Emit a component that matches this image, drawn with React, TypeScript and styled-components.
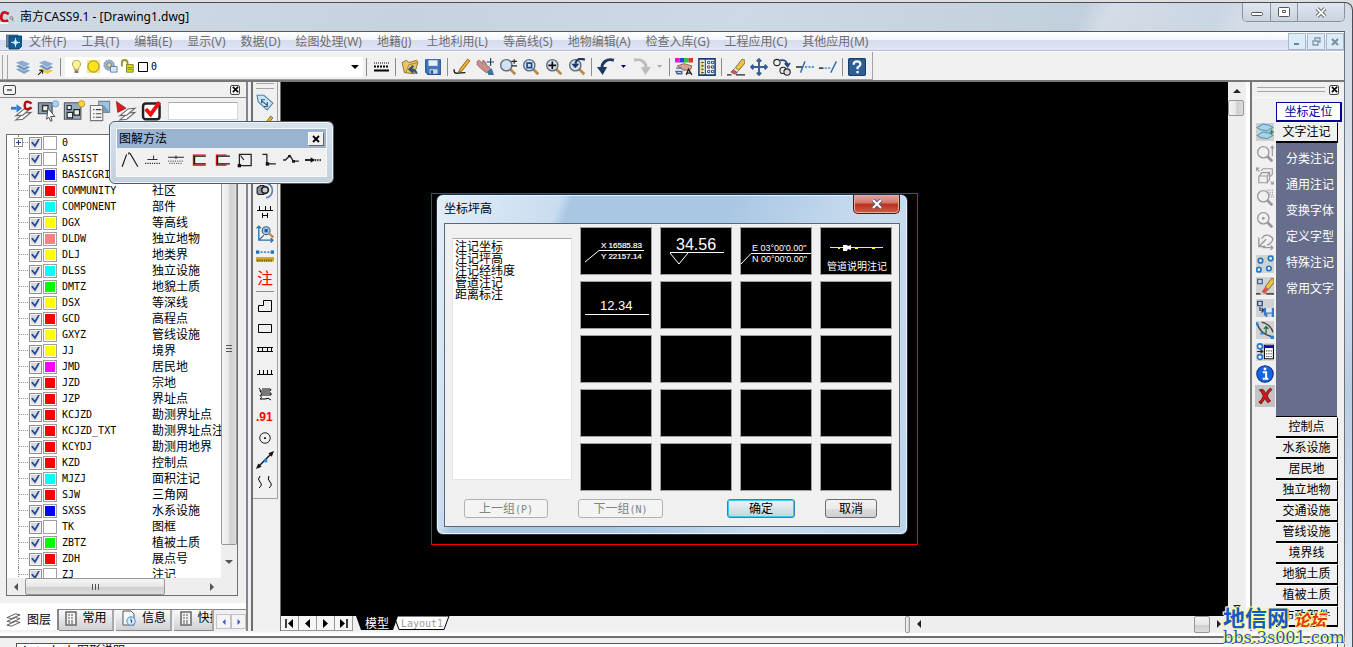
import React from 'react';
import styled, { createGlobalStyle, css } from 'styled-components';

const UI = `'Noto Sans', 'Noto Sans CJK SC', sans-serif`;
const SONG = `'DejaVu Sans Mono', 'Noto Sans CJK SC', monospace`;

const Global = createGlobalStyle`
  * { box-sizing: border-box; }
  body { margin: 0; background: #dedede; font-family: ${UI}; font-size: 12px; line-height: 16px; color: #000; overflow: hidden; }
  button, input, select { font: inherit; color: inherit; margin: 0; padding: 0; border: 0; background: none; border-radius: 0; }
  svg { display: block; flex: none; }
`;

/* ---------- window frame ---------- */
const Frame = styled.div`
  position: relative;
  height: 100vh;
  display: flex;
  flex-direction: column;
  padding-top: 2px;
`;
const Shell = styled.div`
  flex: 1;
  min-height: 0;
  display: flex;
  flex-direction: column;
  padding-right: 7px;
  border-top: 1px solid #4b4f55;
  border-right: 1px solid #4b4f55;
  border-top-right-radius: 8px;
  background: linear-gradient(180deg, #d3dde8 0, #d3dde8 120px, #dbe6f1 200px, #b9cde2 60%, #dbe8f5 100%);
`;
const TitleBar = styled.header`
  display: flex;
  height: 28px;
  align-items: center;
  background: linear-gradient(115deg, #d0dae5 0%, #c6d3df 30%, #cdd9e5 55%, #c2cfdc 80%, #d3dde8 82%, #cad6e2 90%, #d3dde8 92%);
`;
const TitleText = styled.h1`
  flex: 1;
  margin: 0 0 0 6px;
  font-size: 12px;
  font-weight: 400;
`;
const WinButtons = styled.div`
  display: flex;
  align-self: flex-start;
  height: 19px;
  border: 1px solid #8a949f;
  border-top: 0;
  border-radius: 0 0 5px 5px;
  overflow: hidden;
`;
const WinButton = styled.button<{ $w: number }>`
  display: grid;
  place-items: center;
  width: ${p => p.$w}px;
  border-right: 1px solid #8a949f;
  background: linear-gradient(#dfe6ee, #c9d3de);
  &:last-child { border-right: 0; }
`;
const Client = styled.div`
  flex: 1;
  min-height: 0;
  display: flex;
  flex-direction: column;
  border-top: 1px solid #55585e;
  border-right: 1px solid #6d7278;
  background: #f0f0f0;
`;

/* ---------- menu ---------- */
const MenuBar = styled.nav`
  display: flex;
  align-items: center;
  height: 20px;
  padding-left: 6px;
  border-bottom: 1px solid #fff;
  box-shadow: inset 0 -1px #b7bbd0;
  background: linear-gradient(#fff 0, #f2f5fb 40%, #d6dcee 45%, #e2e6f6 100%);
`;
const MenuItem = styled.button`
  padding: 0 8px 0 7px;
  color: #6d6d6d;
  white-space: nowrap;
`;
const MdiButtons = styled.div`
  display: flex;
  gap: 1px;
  margin-left: auto;
`;
const MdiButton = styled.button`
  display: grid;
  place-items: center;
  width: 18px;
  height: 17px;
  border: 1px solid #a9b9c9;
  background: #dcebf8;
`;

/* ---------- top toolbar ---------- */
const ToolRow = styled.div`
  display: flex;
  height: 30px;
  border-bottom: 2px solid #777;
`;
const ToolBar = styled.div`
  display: flex;
  align-items: center;
  padding: 2px 4px 0 2px;
  border-right: 1px solid #a0a0a0;
  border-bottom: 1px solid #a0a0a0;
`;
const Grip = styled.i<{ $flat?: boolean }>`
  display: block;
  border: 1px solid #a6a6a6;
  ${p => p.$flat
    ? css`height: 6px; border-left: 0; border-right: 0;`
    : css`width: 6px; height: 24px; border-top: 0; border-bottom: 0; margin-right: 3px;`}
`;
const Tool = styled.button<{ $w?: number; $h?: number; $on?: boolean }>`
  display: grid;
  place-items: center;
  flex: none;
  width: ${p => p.$w ?? 23}px;
  height: ${p => p.$h ?? 24}px;
  background: ${p => (p.$on ? '#c3c3c3' : 'transparent')};
`;
const Sep = styled.i<{ $flat?: boolean }>`
  display: block;
  flex: none;
  background: #8c8c8c;
  ${p => p.$flat ? css`height: 1px; margin: 2px 3px 3px;` : css`width: 1px; height: 18px; margin: 0 2px 0 3px;`}
`;
const LayerBox = styled.label`
  position: relative;
  display: flex;
  align-items: center;
  gap: 2px;
  width: 298px;
  height: 20px;
  margin-left: 2px;
  padding: 0 4px;
  background: #fff;
  select { flex: 1; appearance: none; font: 10px/16px ${SONG}; outline: 0; }
`;

/* ---------- work area ---------- */
const Work = styled.div`
  flex: 1;
  min-height: 0;
  display: flex;
`;
const Left = styled.aside`
  display: flex;
  flex-direction: column;
  width: 253px;
  flex: none;
  border-right: 2px solid #6e6e6e;
`;
const LeftInner = styled.div`
  flex: 1;
  min-height: 0;
  display: flex;
  flex-direction: column;
  width: 248px;
  border-right: 2px solid #85858c;
`;
const PanelHead = styled.div`
  display: flex;
  justify-content: space-between;
  align-items: center;
  height: 16px;
  padding: 0 6px 0 3px;
  border-bottom: 1px solid #8a8a8a;
`;
const MiniButton = styled.button<{ $w?: number }>`
  display: grid;
  place-items: center;
  width: ${p => p.$w ?? 10}px;
  height: 10px;
  border: 1px solid #444;
  border-radius: 2px;
  background: #f4f4f4;
`;
const LayerTools = styled.div`
  display: flex;
  align-items: center;
  height: 26px;
  padding-left: 9px;
  input { width: 70px; height: 18px; margin-left: 3px; background: #fff; border: 1px solid #d5d5d5; border-top-color: #aaa; }
`;
const ListFrame = styled.div`
  flex: 1;
  min-height: 0;
  display: flex;
  flex-direction: column;
  margin: 10px 8px 7px 6px;
  border: 1px solid #6f6f6f;
`;
const ListArea = styled.div`
  flex: 1;
  min-height: 0;
  display: flex;
`;
const LayerTable = styled.div`
  flex: 1;
  min-width: 0;
  overflow: hidden;
  background: #fff;
`;
const LayerRow = styled.label`
  display: flex;
  align-items: center;
  height: 16px;
  white-space: nowrap;
  > * { flex: none; }
`;
const Branch = styled.span`
  position: relative;
  align-self: stretch;
  width: 11px;
  margin-left: 11px;
  border-left: 1px dotted #888;
  background: linear-gradient(90deg, #999 50%, transparent 50%) 0 7px / 2px 1px repeat-x;
`;
const Expand = styled.button`
  position: absolute;
  left: -5px;
  top: 3px;
  display: grid;
  place-items: center;
  width: 9px;
  height: 9px;
  border: 1px solid #919191;
  background: #fff;
`;
const Check = styled.input`
  appearance: none;
  display: grid;
  place-items: center;
  width: 13px;
  height: 13px;
  border: 1px solid #8e8f8f;
  background: linear-gradient(135deg, #c8d0d8, #f2f4f7);
  box-shadow: inset 0 0 0 1px #f4f4f4;
  &:checked::after {
    content: '';
    width: 9px;
    height: 9px;
    background: #31478f;
    clip-path: polygon(0 45%, 20% 35%, 42% 65%, 82% 0, 100% 4%, 46% 100%);
  }
`;
const Swatch = styled.span<{ $c: string }>`
  width: 14px;
  height: 14px;
  margin: 0 5px 0 1px;
  border: 1px solid #a0a0a0;
  background: ${p => p.$c};
  box-shadow: inset 0 0 0 1px #fff;
`;
const LayerName = styled.span`
  width: 90px;
  font: 10px/16px ${SONG};
`;
const Bar = styled.div<{ $flat?: boolean }>`
  display: flex;
  flex: none;
  flex-direction: ${p => (p.$flat ? 'row' : 'column')};
  ${p => (p.$flat ? css`height: 17px;` : css`width: 16px;`)}
  background: #eeeeee;
`;
const Thumb = styled.div<{ $flat?: boolean; $size?: number }>`
  display: grid;
  place-items: center;
  flex: ${p => (p.$size ? `0 0 ${p.$size}px` : '1')};
  border: 1px solid #979797;
  border-radius: 2px;
  background: linear-gradient(${p => (p.$flat ? '180deg' : '90deg')}, #f5f5f5, #e6e6e6 50%, #cfcfcf 55%, #dcdcdc);
`;
const Spacer = styled.div<{ $size?: number }>`
  flex: ${p => (p.$size ? `0 0 ${p.$size}px` : '1')};
`;
const PaneTabs = styled.div`
  display: flex;
  height: 28px;
  padding-top: 6px;
  background: linear-gradient(#fff 6px, #85858c 6px, #85858c 7px, #f0f0f0 7px);
`;
const PaneTab = styled.button<{ $on?: boolean; $w: number }>`
  display: flex;
  align-items: center;
  gap: 6px;
  width: ${p => p.$w}px;
  height: 21px;
  overflow: hidden;
  white-space: nowrap;
  padding-left: 6px;
  background: ${p => (p.$on ? '#fff' : 'linear-gradient(#fafafa, #cfcfd4)')};
  border-right: 2px solid ${p => (p.$on ? '#85858c' : '#a8a8ac')};
  ${p => !p.$on && css`border-bottom: 1px solid #85858c; margin-top: 1px; padding-bottom: 4px; margin-right: 2px;`}
`;
const PageButton = styled.button`
  display: grid;
  place-items: center;
  width: 15px;
  height: 15px;
  margin-top: 5px;
  border: 1px solid #c2c2c8;
  background: #f4f4f6;
`;

const SideTools = styled.div`
  display: flex;
  flex-direction: column;
  align-self: flex-start;
  width: 25px;
  flex: none;
  padding: 1px 0 5px;
  border-right: 1px solid #a0a0a0;
  border-bottom: 1px solid #a0a0a0;
`;
const SideDock = styled.div`
  width: 28px;
  flex: none;
  border-right: 1px solid #6e6e6e;
  ${SideTools} ${Grip} { margin: 0 3px 2px; }
`;

const Center = styled.main`
  position: relative;
  flex: 1;
  min-width: 0;
  display: flex;
  flex-direction: column;
`;
const ViewRow = styled.div`
  flex: 1;
  min-height: 0;
  display: flex;
`;
const Canvas = styled.div`
  position: relative;
  flex: 1;
  background: #000;
`;
const RedBox = styled.div`
  position: absolute;
  left: 150px;
  top: 111px;
  width: 487px;
  height: 352px;
  border: 1px solid #f00;
`;
const LayoutRow = styled.div`
  display: flex;
  height: 15px;
  flex: none;
  background: #f0f0f0;
`;
const NavButton = styled.button`
  display: grid;
  place-items: center;
  width: 18px;
  height: 15px;
  border-right: 1px solid #999;
  border-bottom: 1px solid #999;
  background: #f6f6f6;
`;
const SheetTab = styled.button<{ $on?: boolean }>`
  position: relative;
  z-index: ${p => (p.$on ? 1 : 0)};
  width: ${p => (p.$on ? 42 : 56)}px;
  height: 15px;
  line-height: 15px;
  margin-left: ${p => (p.$on ? 3 : -4)}px;
  color: ${p => (p.$on ? '#fff' : '#9a9a9a')};
  font-family: ${p => (p.$on ? UI : SONG)};
  font-size: ${p => (p.$on ? 12 : 10)}px;
  svg { position: absolute; left: 0; top: 0; z-index: -1; }
`;

/* ---------- right dock ---------- */
const Right = styled.aside`
  display: flex;
  flex-direction: column;
  width: 94px;
  flex: none;
  margin-left: 6px;
  border-left: 2px solid #777;
  box-shadow: -4px 0 #fff;
  overflow: hidden;
`;
const RightHead = styled.div`
  display: flex;
  align-items: center;
  gap: 4px;
  height: 16px;
  padding: 0 5px;
  border-bottom: 1px solid #f8f8ff;
  ${Grip} { flex: 1; height: 5px; }
`;
const RightBody = styled.div`
  flex: 1;
  min-height: 0;
  display: flex;
  padding: 4px 2px 4px 3px;
`;
const RightIcons = styled.div`
  padding-top: 19px;
  width: 20px;
  margin-right: 1px;
`;
const RightMenu = styled.div`
  flex: 1;
  display: flex;
  flex-direction: column;
  min-width: 0;
  overflow: hidden;
`;
const Locate = styled.button`
  width: 66px;
  height: 20px;
  flex: none;
  border: 2px solid #00009c;
  border-top-width: 1px;
  border-left-width: 1px;
  color: #00009c;
  background: #fff;
`;
const Category = styled.button`
  width: 62px;
  height: 21px;
  flex: none;
  border-top: 1px solid #fff;
  border-right: 1px solid #000;
  border-bottom: 2px solid #000;
  background: #f0f0f0;
`;
const SubPanel = styled.div`
  display: flex;
  flex-direction: column;
  align-items: flex-start;
  flex: 1;
  width: 61px;
  min-height: 274px;
  padding-top: 3px;
  background: #666e8c;
  border-bottom: 1px solid #000;
`;
const SubItem = styled.button`
  height: 26px;
  padding-left: 10px;
  color: #fff;
  flex: none;
`;

/* ---------- floating toolbar ---------- */
const Floating = styled.section`
  position: absolute;
  left: 109px;
  top: 121px;
  width: 225px;
  padding: 6px;
  border: 1px solid #4d5964;
  border-radius: 6px;
  background: linear-gradient(#d8e2ed, #c3d0de);
  box-shadow: inset 0 0 0 1px #eef3f8;
`;
const FloatingBody = styled.div`
  border: 1px solid #f8f8f8;
  background: #f0f0f0;
`;
const FloatingTitle = styled.div`
  display: flex;
  align-items: center;
  justify-content: space-between;
  height: 19px;
  padding: 0 2px;
  background: #99b4d1;
`;
const FloatingClose = styled.button`
  display: grid;
  place-items: center;
  width: 16px;
  height: 14px;
  border: 1px solid #666;
  border-top-color: #fff;
  border-left-color: #fff;
  background: #f0f0f0;
`;
const FloatingTools = styled.div`
  display: flex;
  height: 28px;
  padding-left: 1px;
`;

/* ---------- dialog ---------- */
const Dialog = styled.section`
  position: absolute;
  left: 155px;
  top: 112px;
  width: 472px;
  padding: 0 7px 7px;
  border: 1px solid #23303d;
  border-radius: 7px;
  background: linear-gradient(110deg, #e4eef8 0, #c9dcef 21%, #a9c7e3 23%, #a9c7e3 50%, #c9dcef 75%, #bdd3ea 100%);
  box-shadow: inset 0 0 0 1px #e8f3fd;
`;
const DialogTitle = styled.div`
  display: flex;
  align-items: center;
  height: 28px;
  h2 { flex: 1; margin: 0; font-size: 12px; font-weight: 400; }
`;
const RedClose = styled.button`
  display: grid;
  place-items: center;
  align-self: flex-start;
  width: 47px;
  height: 19px;
  border: 1px solid #4b1a1a;
  border-top: 0;
  border-radius: 0 0 5px 5px;
  background: linear-gradient(#e5a79c 0, #d27465 45%, #b9321d 50%, #d4594a 100%);
  box-shadow: inset 0 0 0 1px #e9a79d;
`;
const DialogBody = styled.div`
  padding: 3px 7px 8px;
  border: 1px solid #586878;
  background: #f0f0f0;
`;
const DialogMain = styled.div`
  display: flex;
  align-items: flex-start;
  gap: 8px;
`;
const ListBox = styled.select`
  width: 120px;
  height: 242px;
  margin-top: 11px;
  padding: 0 2px;
  border: 1px solid #e3e3e3;
  border-top-color: #ababab;
  background: #fff;
  overflow: hidden;
  outline: 0;
  option { height: 12px; min-height: 12px; padding: 0; line-height: 12px; }
  option:first-child { margin-top: -2px; }
`;
const Tiles = styled.div`
  display: grid;
  grid-template-columns: repeat(4, 72px);
  grid-auto-rows: 48px;
  gap: 6px 8px;
`;
const Tile = styled.button`
  border: 1px solid #a0a0a0;
  background: #000;
  overflow: hidden;
`;
const DialogButtons = styled.div`
  display: flex;
  align-items: center;
  height: 19px;
  margin-top: 8px;
  padding-left: 12px;
`;
const PushButton = styled.button<{ $w: number; $gap?: number; $main?: boolean }>`
  width: ${p => p.$w}px;
  height: 19px;
  margin-left: ${p => p.$gap ?? 0}px;
  line-height: 15px;
  border: 1px solid #707070;
  border-radius: 3px;
  background: linear-gradient(#f2f2f2, #ebebeb 50%, #dddddd 50%, #cfcfcf);
  ${p => p.$main && css`border-color: #3c7fb1; box-shadow: inset 0 0 0 1px #3fc8f4; background: linear-gradient(#f0f5f8, #d8e4ea 50%, #c5d4dc);`}
  &:disabled { color: #838383; border-color: #adb2b5; background: #f4f4f4; }
  span { font: 10px/15px ${SONG}; }
`;

/* ---------- command strip and site mark ---------- */
const CommandStrip = styled.footer`
  height: 16px;
  flex: none;
  padding: 5px 6px 0 0;
  overflow: hidden;
  background: linear-gradient(#f0f0f0 0, #fff 3px, #fff 5px, #6e6e6e 5px, #6e6e6e 7px, #f0f0f0 7px);
`;
const CommandText = styled.div`
  margin: 7px 0 0 16px;
  height: 20px;
  padding-left: 4px;
  line-height: 14px;
  border: 1px solid #555;
  background: #fff;
`;
const SiteMark = styled.div`
  position: absolute;
  right: 6px;
  bottom: 2px;
  width: 124px;
  color: #1459c8;
  font-family: 'Liberation Serif', 'Noto Sans CJK SC', serif;
  text-shadow: 1px 0 #ff8, -1px 0 #ff8, 0 1px #ff8, 0 -1px #ff8, 1px 1px #ff8, -1px -1px #ff8;
  pointer-events: none;
  div { font-size: 22px; font-weight: 700; line-height: 20px; white-space: nowrap; }
  em { margin-left: 5px; font-size: 16px; color: #e8301c; }
  p { margin: 0; font: 400 16px/14px 'DejaVu Serif', serif; }
`;

/* ---------- drawings ---------- */
const Svg = ({ s = 18, h, vb = '0 0 16 16', children }: { s?: number; h?: number; vb?: string; children: React.ReactNode }) => (
  <svg width={s} height={h ?? s} viewBox={vb} fill="none" aria-hidden="true">{children}</svg>
);
const Tri = ({ d, c = '#222' }: { d: 'u' | 'd' | 'l' | 'r'; c?: string }) => {
  const pts = { u: '0,6 4,2 8,6', d: '0,2 4,6 8,2', l: '6,0 2,4 6,8', r: '2,0 6,4 2,8' }[d];
  return <Svg s={8} vb="0 0 8 8"><polygon points={pts} fill={c} /></Svg>;
};
const Cross = ({ s = 8, c = '#000', w = 1.6 }: { s?: number; c?: string; w?: number }) => (
  <Svg s={s} vb="0 0 8 8"><path d="M1 1l6 6M7 1l-6 6" stroke={c} strokeWidth={w} /></Svg>
);
const Layers = ({ last = '#7f9fc4', children }: { last?: string; children?: React.ReactNode }) => (
  <Svg>
    <path d="M1 10l6-2 8 3-6 3.500z" fill={last} stroke="#fff" strokeWidth=".5" />
    <path d="M1 7l6-2 8 3-6 3.500z" fill="#6f94bb" stroke="#fff" strokeWidth=".5" />
    <path d="M1 4l6-2 8 3-6 3.500z" fill="#8bacd0" stroke="#fff" strokeWidth=".5" />
    {children}
  </Svg>
);
const Lens = ({ c = '#667', handle = '#b98a4a', glass = '#cfe2f3', children }: { c?: string; handle?: string; glass?: string; children?: React.ReactNode }) => (
  <Svg>
    <path d="M10 10l4.500 4.500" stroke={handle} strokeWidth="2.400" />
    <circle cx="6.500" cy="6.500" r="5" fill={glass} stroke={c} strokeWidth="1.200" />
    {children}
  </Svg>
);
const Sheets = () => (
  <><path d="M3.500 14.500l5-.5 6-5-5 .5z" fill="#fff" stroke="#666" strokeWidth=".8" /><path d="M3.500 11.500l5-.5 6-5-5 .5z" fill="#fff" stroke="#666" strokeWidth=".8" /></>
);
const fourWay = 'M8 1v14M1 8h14M6 3l2-2 2 2M6 13l2 2 2-2M3 6L1 8l2 2M13 6l2 2-2 2';

const Bulb = () => (
  <Svg s={15}><path d="M5.500 11V9C2 6 4 1.500 8 1.500S14 6 10.500 9v2z" fill="#fdf3a0" stroke="#b89a30" /><path d="M6 12h4v3H6z" fill="#777" /></Svg>
);
const SunIcon = () => (
  <Svg s={15}><path d="M1 1h14v14H1z" fill="#f8e48c" /><circle cx="8" cy="8" r="6" fill="#ffe417" stroke="#8a8334" /></Svg>
);
const SunSheet = () => (
  <Svg s={15}><circle cx="6.500" cy="6.500" r="5.500" fill="#9db5cc" stroke="#5f7f9f" strokeDasharray="2 1" /><circle cx="6.500" cy="6.500" r="2.500" fill="#e6d79b" stroke="#5f7f9f" /><path d="M8 8h7v6H8z" fill="#dbe7f2" stroke="#5b83ad" /></Svg>
);
const LockIcon = () => (
  <Svg s={15}><path d="M2 8V4q0-3 3-3t3 3v4" stroke="#93912a" strokeWidth="2" /><path d="M7 6h7v8H7z" fill="#e3e02a" stroke="#7c7a1c" /><path d="M8 9h5M8 11h5" stroke="#7c7a1c" /></Svg>
);
const Book = () => (
  <Svg><path d="M1 4l4-2 2 2 7-2 1 2-3 10-9-1z" fill="#e9c46a" stroke="#8a6a24" strokeWidth=".8" /><path d="M4 13L7 6l8-2" stroke="#a97f2c" strokeWidth=".8" /><path d="M14 14q-1-4-6-4M11 7L7.500 10l3.500 3" stroke="#30527a" strokeWidth="1.800" /></Svg>
);
const Disk = () => (
  <Svg><path d="M1.500 1.500h13v13h-11l-2-2z" fill="#3f78c0" stroke="#234f8c" /><path d="M4 2h8v5H4z" fill="#e6eef8" /><path d="M5 10h7v4H5z" fill="#c9d6e6" /><path d="M6 11h2v3H6z" fill="#234f8c" /></Svg>
);
const Pencil = () => (
  <Svg><path d="M6 10L13 1l2 1.500L8 11.500l-3 1z" fill="#f0b22e" stroke="#8c5a14" strokeWidth=".8" /><path d="M1 10q-.5 4 3 3.500t7-.5" stroke="#111" strokeWidth="1.200" /></Svg>
);
const Hand = () => (
  <Svg><path d="M1 3l2-1 3 3V2l2 1 2 4 2 1 1 4-4 1-5-4-3-3z" fill="#c98f86" stroke="#8e5f58" strokeWidth=".7" /><path d="M10 12l4-3 2 6h-5z" fill="#4070a8" /><path d="M13 0v7M9.500 3.500h6.500" stroke="#1c3f70" /></Svg>
);
const Undo = ({ c = '#1b3763', flip }: { c?: string; flip?: boolean }) => (
  <Svg><g transform={flip ? 'matrix(-1 0 0 1 16 0)' : undefined}><path d="M15 2C9 0 4 4 4.500 9" stroke={c} strokeWidth="2.600" /><path d="M0 8h9l-4 7z" fill={c} /></g></Svg>
);
const Palette = () => (
  <Svg><path d="M0 0h4v4H0z" fill="#e81ac8" /><path d="M4 0h4v4H4z" fill="#2b3ff0" /><path d="M8 0h4v4H8z" fill="#1ecb3a" /><path d="M12 0h4v4h-4z" fill="#e8341e" /><path d="M2 7l6-2 7 2-1 3-6 1-3-2z" fill="#d9a190" stroke="#864f42" strokeWidth=".7" /><path d="M1 9h5M1 12h5v2H2z" stroke="#43699c" strokeWidth="1.300" /><path d="M10 15l2-5 3 5M11 13.500h3" stroke="#222" strokeWidth="1.200" /></Svg>
);
const Grid = () => (
  <Svg><path d="M.8.8h14.400v14.400H.8z" fill="#fff" stroke="#1b3f73" strokeWidth="1.400" /><path d="M2 2h3v12H2z" fill="#e8dd72" /><path d="M6.500 1v14" stroke="#1b3f73" /><path d="M8.500 3h2v2h-2zM12 3h2v2h-2zM8.500 7h2v2h-2zM12 7h2v2h-2zM8.500 11h2v2h-2zM12 11h2v2h-2z" stroke="#1b3f73" strokeWidth=".8" /><path d="M3 4h2M3 7h2M3 10h2M3 13h2" stroke="#333" /></Svg>
);
const Eraser = () => (
  <Svg><path d="M7.500 8.500L13.500 1 16 2v2.500L10.500 11z" fill="#f2c530" stroke="#555" strokeWidth=".7" /><path d="M7.500 8.500l3 2.500-1.500 2-3.500-2.500z" fill="#ddd" stroke="#666" strokeWidth=".5" /><path d="M5.500 10.500L9 13l-2 1.500-3.500-2z" fill="#e0584a" stroke="#744" strokeWidth=".7" /><path d="M0 15h4M8 15h8" stroke="#222" /></Svg>
);
const Copy = () => (
  <Svg><circle cx="3.500" cy="4" r="2.800" stroke="#222" /><circle cx="9" cy="11" r="2.800" fill="#eee" stroke="#222" /><circle cx="12.500" cy="12.500" r="2.800" fill="#ddd" stroke="#222" /><path d="M6.500 2q6-1 6.500 5M10.500 4.500l2.500 3 2-3" stroke="#244a82" strokeWidth="1.600" /></Svg>
);
const Trim = () => (<Svg><path d="M0 8h6" stroke="#222" strokeWidth="1.300" /><path d="M8 8h8" stroke="#2884d8" strokeDasharray="2 1" strokeWidth="1.200" /><path d="M4 13L8 3" stroke="#2d66ad" strokeWidth="1.200" /></Svg>);
const Extend = () => (<Svg><path d="M0 9h4" stroke="#222" strokeWidth="1.300" /><path d="M5 9h6" stroke="#2884d8" strokeDasharray="2 1" strokeWidth="1.200" /><path d="M10.500 13l5-10" stroke="#2d66ad" strokeWidth="1.200" /></Svg>);
const Help = () => (
  <Svg><rect x=".5" y=".5" width="15" height="15" rx="1" fill="#2c5f96" stroke="#1b3f66" /><path d="M5 6q0-3 3-3t3 2.500Q11 7 8.500 8.500V10M8.500 11.500v2" stroke="#fff" strokeWidth="2" /></Svg>
);
const Tag = () => (<Svg><path d="M1 2l6 0 8 7-5 6-8-7z" fill="#cfe4f3" stroke="#4f86ad" /><path d="M5 7l5 4M5 9V6h3M10 8v4H7" stroke="#24598c" /></Svg>);
const Line = ({ d }: { d: string }) => (
  <Svg s={16}><path d={d} stroke="#000" /></Svg>
);
const Gear = () => (<Svg><path d="M1 11V6l3-2h3v8H2z" fill="#8a94a0" stroke="#222" /><circle cx="8" cy="8" r="3" fill="#c9ced6" stroke="#222" strokeWidth="1.500" /><path d="M10 2q5 2 4.500 7T9 15" stroke="#5b84b5" strokeWidth="1.500" /></Svg>);
const AxisLens = () => (<Svg><path d="M2.500 1v12.500H15M.5 3l2-2 2 2M13 11.500l2 2-2 2M3 13l4-4" stroke="#2570b0" strokeWidth="1.200" /><circle cx="9" cy="5" r="3.500" fill="#a9cdea" stroke="#2d5f92" /><path d="M7.500 3.500h3v3h-3z" fill="#2d5f92" /><path d="M11.500 7.500l4 3.500" stroke="#c58b3d" strokeWidth="2" /></Svg>);
const Ruler = () => (<Svg><path d="M0 3h3v3H0zM13 3h3v3h-3z" fill="#1d6fc4" /><path d="M4 4.500h8" stroke="#1d6fc4" strokeDasharray="2 1" /><path d="M0 9h16v4H0z" fill="#c9a82c" /><path d="M1 12h14" stroke="#6b5510" strokeWidth="2" strokeDasharray="1 1" /></Svg>);

const topTools: React.ReactNode[][] = [
  [<Book />, <Disk />],
  [
    <Pencil />, <Hand />,
    <Lens><path d="M11 3h5M13.500 1v4M11 7h5" stroke="#222" /></Lens>,
    <Lens><path d="M4.500 4.500h4v4h-4z" stroke="#1c4d90" strokeWidth="1.500" /></Lens>,
    <Lens><path d="M6.500 3v7M3 6.500h7" stroke="#111" strokeWidth="1.500" /></Lens>,
    <Lens><path d="M15 1.500Q8-1 6.500 5" stroke="#1b3763" strokeWidth="2" /><path d="M3 5h7L6.500 9z" fill="#1b3763" /></Lens>,
  ],
];
const editTools = [<Eraser />, <Svg><path d={fourWay} stroke="#355f96" strokeWidth="1.700" /></Svg>, <Copy />, <Trim />, <Extend />];

const menus = ['文件(F)', '工具(T)', '编辑(E)', '显示(V)', '数据(D)', '绘图处理(W)', '地籍(J)', '土地利用(L)', '等高线(S)', '地物编辑(A)', '检查入库(G)', '工程应用(C)', '其他应用(M)'];

const layers: [string, string, string][] = [
  ['0', '#fff', ''], ['ASSIST', '#fff', ''], ['BASICGRID', '#00f', ''], ['COMMUNITY', '#f00', '社区'], ['COMPONENT', '#0ff', '部件'],
  ['DGX', '#ff0', '等高线'], ['DLDW', '#ff8080', '独立地物'], ['DLJ', '#ff0', '地类界'], ['DLSS', '#0ff', '独立设施'], ['DMTZ', '#0f0', '地貌土质'],
  ['DSX', '#ff0', '等深线'], ['GCD', '#f00', '高程点'], ['GXYZ', '#ff0', '管线设施'], ['JJ', '#ff0', '境界'], ['JMD', '#f0f', '居民地'],
  ['JZD', '#f00', '宗地'], ['JZP', '#f00', '界址点'], ['KCJZD', '#f00', '勘测界址点'], ['KCJZD_TXT', '#f00', '勘测界址点注记'], ['KCYDJ', '#f00', '勘测用地界'],
  ['KZD', '#f00', '控制点'], ['MJZJ', '#0ff', '面积注记'], ['SJW', '#f00', '三角网'], ['SXSS', '#00f', '水系设施'], ['TK', '#fff', '图框'],
  ['ZBTZ', '#0f0', '植被土质'], ['ZDH', '#f00', '展点号'], ['ZJ', '#fff', '注记'],
];

const layerTools = [
  <Svg s={22}><Sheets /><path d="M0 6h4" stroke="#2d7bd0" strokeWidth="2" /><path d="M4 3l4 3-4 3z" fill="#2d7bd0" /><path d="M15 2.500q-5-3-5 1.500t5 1.500" stroke="#b01010" strokeWidth="1.800" /></Svg>,
  <Svg s={22}><path d="M1 2h10v8H1z" fill="#8ba2bb" stroke="#444" strokeWidth=".8" /><path d="M4 4h4v4H4z" fill="#eed" stroke="#333" /><path d="M8 6l5 6-3 0 1 3-1 .5-1.500-3L7 14z" fill="#fff" stroke="#444" strokeWidth=".7" /><circle cx="13.500" cy="2.800" r="2.300" fill="#a9d4f5" stroke="#6c9bc2" strokeWidth=".6" /></Svg>,
  <Svg s={22}><path d="M1 2h12v12H1z" fill="#92aac4" stroke="#555" strokeWidth=".8" /><path d="M3 4h3v3H3zM3 9h4v4H3zM8 7h4v4H8z" fill="#eee" stroke="#222" strokeWidth=".8" /><circle cx="13.500" cy="2.800" r="2.300" fill="#ffd83a" stroke="#b18a1c" strokeWidth=".6" /></Svg>,
  <Svg s={22}><path d="M7 1h8v8H7z" fill="#9cc3e0" stroke="#789" strokeWidth=".8" /><path d="M8 8l3-4 4 5z" fill="#6f9cb8" /><path d="M1 4h9v11H1z" fill="#f4f4f4" stroke="#777" strokeWidth=".8" /><path d="M3 7h1M3 10h1M3 12.500h1M5 7h4M5 10h4M5 12.500h4" stroke="#444" strokeWidth=".8" /></Svg>,
  <Svg s={22}><Sheets /><path d="M1 1l7 5-6 3z" fill="#d51f1f" stroke="#8a1010" strokeWidth=".5" /></Svg>,
  <Svg s={22}><rect x="1.500" y="2.500" width="12" height="11.500" rx="2" fill="#fff" stroke="#222" strokeWidth="1.800" /><path d="M3.500 6.500l3.500 4L13.500 1.500" stroke="#f01010" strokeWidth="2.800" /></Svg>,
];

const floatIcons = [
  <Svg><path d="M1 14L5 3M8 2l7 12M7 1v2" stroke="#222" strokeWidth="1.100" /></Svg>,
  <Svg><path d="M3 7.500h9M8.500 4v3" stroke="#333" strokeWidth=".9" /><path d="M1 11h14" stroke="#222" strokeDasharray="1 1" /></Svg>,
  <Svg><path d="M1 5.500h14M8 4v3" stroke="#222" strokeWidth=".9" /><path d="M1 9h14M2 11h12" stroke="#666" strokeDasharray="1 1" /></Svg>,
  <Svg><path d="M14 4.500H4v7h10" stroke="#111" strokeWidth="1.200" /><path d="M14 3.500H3v9h11" stroke="#e00000" /></Svg>,
  <Svg><path d="M12 3.500H3v9h9" stroke="#e00000" /><path d="M15 4.500H4v7h11" stroke="#111" strokeWidth="1.200" /></Svg>,
  <Svg><path d="M3 13V3h10.500v10zM4 4l3 4" stroke="#222" strokeWidth="1.100" /><path d="M1.500 11.500h3v3h-3z" fill="#111" /></Svg>,
  <Svg><path d="M3 3h4v8.500h8" stroke="#222" strokeWidth="1.100" /><path d="M6 10h3v3H6z" fill="#111" /></Svg>,
  <Svg><path d="M1 8h2l4-4 3 5h5" stroke="#222" strokeWidth="1.200" /><path d="M5.500 3.500h2v2h-2zM9 8h2.500v2.500H9z" fill="#111" /></Svg>,
  <Svg><path d="M0 8h8" stroke="#111" strokeWidth="1.600" /><path d="M5 5.500l4 2.500-4 2.500z" fill="#111" /><path d="M9 8h6" stroke="#111" strokeWidth="2" strokeDasharray="1 1" /></Svg>,
];

const sideA = [
  <Tag />, <Pencil />, <Pencil />, <Tag />, <Gear />,
  <Line d="M0 6.500h16M2.500 2v4M8.500 2v4M13.500 2v4M5.500 9v5M10.500 9v5M5 11.500h6" />,
  <AxisLens />, <Ruler />,
];
const sideB = [
  <Line d="M1.500 7.500h5v-5h8v11h-13z" />,
  <Line d="M1.500 4.500h13v8h-13z" />,
  <Line d="M0 5.500h16M0 9.500h16M1.500 5v5M5.500 5v5M10.500 5v5M14.500 5v5" />,
  <Line d="M0 10.500h16M2.500 6v4M6.500 6v4M10.500 6v4M14.500 6v4" />,
  <Line d="M2 2q2 2 1 3h10q2-2 0-2H5M3 5q3 3 1 4h10V7H5M3 9q3 3 0 4h5q3-2 6 1" />,
];

const gray = '#999';
const rightIcons = [
  <Svg><path d="M0 0h16v16H0z" fill="#cfcfcf" /><path d="M1 4l5-3 6 1 3 2-5 3-6-1zM1 11l5-3 6 1 3 2-5 3-6-1z" fill="#a6d3e8" stroke="#5b9aba" /><path d="M14 6v4M12 8h4" stroke="#137a38" /></Svg>,
  <Lens c={gray} handle={gray} glass="none"><path d="M14.500 1v9M13 3l1.500-2L16 3" stroke={gray} /></Lens>,
  <Svg><path d="M4.500 3.500l2-2h8v5l-2 2M3 8l2-3h7l-2 3zM2.500 8h7.500v6H2.500zM10 8l2-3v6l-2 3M0 1l3 3M0 4V1h3M13 13l3 2M16 12v3h-3" stroke={gray} /></Svg>,
  <Lens c={gray} handle={gray} glass="none"><path d="M10 1h6M10 3h6M12 5h4M13 7h3" stroke={gray} strokeDasharray="1 1" /></Lens>,
  <Lens c={gray} handle={gray} glass="none"><circle cx="6.500" cy="6.500" r="1.200" fill={gray} /></Lens>,
  <Svg><path d="M2.500 4v8h6M3 11.500l6-6M5 5Q8 0 13 3t-3 8M6 13h9M13 11l2 2-2 2" stroke={gray} strokeWidth="1.200" /></Svg>,
  <Svg><path d="M0 0h16v16H0z" fill="#d2d2d2" /><g fill="#e8f5ff" stroke="#2277c4" strokeWidth="1.500"><circle cx="4" cy="5" r="2" /><circle cx="13" cy="3" r="2" /><circle cx="2.500" cy="13" r="2" /><circle cx="11.500" cy="12" r="2" /></g></Svg>,
  <Svg><path d="M0 0h16v16H0z" fill="#d2d2d2" /><path d="M1.500 2h4v4h-4z" stroke="#23558f" /><path d="M8 9l6-8 2 1v3l-5 6z" fill="#f2c530" stroke="#555" strokeWidth=".7" /><path d="M5 13l3-4 3 2-3 4z" fill="#d4574a" /><path d="M0 15h4M9 15h7" stroke="#222" /></Svg>,
  <Svg><path d="M0 0h16v16H0z" fill="#d2d2d2" /><path d="M1.500 2h4v4h-4zM3.500 7v3h3M5 8l2 2-2 2" stroke="#1d3d78" strokeWidth="1.100" /><path d="M7 8h9v8H9l-2-2z" fill="#3f78c0" /><path d="M9 8h5v4H9z" fill="#dce8f4" /><path d="M10 13h4v3h-4z" fill="#c9d6e6" /></Svg>,
  <Svg><path d="M0 0h16v16H0z" fill="#d2d2d2" /><path d="M1 2q2 9 13 12M5 1q8 2 10 9" stroke="#444" strokeWidth="1.200" /><path d="M0 1h2v3H0zM4 10h3v2H4zM13 13h3v3h-3z" fill="#1d87d6" /><path d="M9 11V5M7 7l2-2 2 2" stroke="#14723a" strokeWidth="1.200" /></Svg>,
  <Svg><path d="M0 0h16v16H0z" fill="#d8d8d8" /><circle cx="3.500" cy="3" r="2.200" fill="#e8f5ff" stroke="#2277c4" strokeWidth="1.400" /><circle cx="3.500" cy="12.500" r="2.200" fill="#e8f5ff" stroke="#2277c4" strokeWidth="1.400" /><path d="M1 7.500h5M4 6l2 1.500L4 9" stroke="#222" /><path d="M7.500 2h8v12h-8z" fill="#fff" stroke="#111" /><path d="M7 3.500h9" stroke="#1010a0" strokeWidth="2" /><path d="M9 7h6M9 9.500h6M9 12h6" stroke="#333" strokeDasharray="1 1" /></Svg>,
  <Svg><circle cx="8" cy="8" r="7.300" fill="#1464e8" stroke="#0b2f86" /><path d="M6 6.500h3V12M6 12.300h5" stroke="#fff" strokeWidth="1.800" /><circle cx="8" cy="3.600" r="1.300" fill="#fff" /></Svg>,
  <Svg><path d="M3 2.500l3-.5q1.500 1 2.500 4 2-4 4.500-5l1 1.500q-3 2.500-4 5.500 1.500 3 3 4.500L10.500 14Q9 12.500 8 10q-1.500 3-3.500 5L2.500 13.500q3-2.500 4-5.500Q5 4.500 3 2.500z" fill="#d01818" stroke="#6a0c0c" strokeWidth=".7" /></Svg>,
];

const subItems = ['分类注记', '通用注记', '变换字体', '定义字型', '特殊注记', '常用文字'];
const categories = ['控制点', '水系设施', '居民地', '独立地物', '交通设施', '管线设施', '境界线', '地貌土质', '植被土质', '市政部件'];

const tileArt: React.ReactNode[] = [
  <svg width="70" height="46" fill="none">
    <path d="M4 34L18 22.500H63" stroke="#fff" />
    <g fill="#fff" fontFamily="Liberation Sans" fontSize="8" stroke="#fff" strokeWidth=".2"><text x="20" y="20">X 16585.83</text><text x="20" y="31">Y 22157.14</text></g>
  </svg>,
  <svg width="70" height="46" fill="none">
    <path d="M9 24.500H63M9 25l9 11 9-11" stroke="#fff" />
    <text x="15" y="22" fill="#fff" fontFamily="Liberation Sans" fontSize="16">34.56</text>
  </svg>,
  <svg width="70" height="46" fill="none">
    <path d="M0 36l10-10.500h60" stroke="#fff" />
    <g fill="#fff" fontFamily="Liberation Sans" fontSize="9"><text x="11" y="23">E 03°00'0.00"</text><text x="11" y="34">N 00°00'0.00"</text></g>
  </svg>,
  <svg width="70" height="46" fill="none">
    <path d="M9 19.500h53" stroke="#ff0" /><path d="M17 20.500h2M34 20.500h3M51 20.500h3" stroke="#ff0" />
    <path d="M22 17h4l1 1 3-1v5l-3-1-1 2h-4z" fill="#fff" />
    <text x="6" y="42" fill="#fff" fontFamily="Noto Sans CJK SC" fontSize="10">管道说明注记</text>
  </svg>,
  <svg width="70" height="46" fill="none">
    <path d="M4 32.500h64" stroke="#fff" />
    <text x="19" y="28" fill="#fff" fontFamily="Liberation Sans" fontSize="13">12.34</text>
  </svg>,
];

const App = () => (
  <>
    <Global />
    <Frame>
      <Shell>
        <TitleBar>
          <Svg s={14}><path d="M10 4.500Q2 0 1.500 7.500T9.500 12" stroke="#c4141c" strokeWidth="3.200" /><path d="M0 15h9" stroke="#fff" strokeWidth="2" /><circle cx="13" cy="9" r="1.600" stroke="#777" /><path d="M14.500 9v4" stroke="#777" /></Svg>
          <TitleText>南方CASS9.1 - [Drawing1.dwg]</TitleText>
          <WinButtons>
            <WinButton $w={28} aria-label="最小化"><Svg s={14} h={10} vb="0 0 14 10"><rect x="1.500" y="5.500" width="11" height="3" rx="1" fill="#fff" stroke="#555" /></Svg></WinButton>
            <WinButton $w={27} aria-label="还原"><Svg s={14} h={12} vb="0 0 14 12"><rect x="1.500" y="1.500" width="11" height="9" rx="1" fill="#fff" stroke="#555" /><path d="M5.500 4.500h3v2h-3z" stroke="#555" /></Svg></WinButton>
            <WinButton $w={46} aria-label="关闭"><Svg s={12} h={11} vb="0 0 12 11"><path d="M2 1.500l8 8M10 1.500l-8 8" stroke="#555" strokeWidth="3.800" /><path d="M2 1.500l8 8M10 1.500l-8 8" stroke="#fff" strokeWidth="1.800" /></Svg></WinButton>
          </WinButtons>
        </TitleBar>
        <Client>
          <MenuBar>
            <Svg s={16}><path d="M0 1h12v12H0z" fill="#6d8ea6" stroke="#234" strokeWidth=".6" /><path d="M3 2h13v10l-3 3H3z" fill="#0f5f97" stroke="#0a3558" strokeWidth=".8" /><path d="M9.500 4v9M5 8.500h9M8 7h3v3H8z" stroke="#fff" strokeWidth=".8" /></Svg>
            {menus.map(m => <MenuItem key={m}>{m}</MenuItem>)}
            <MdiButtons>
              <MdiButton aria-label="最小化文档"><Svg s={8} vb="0 0 8 8"><path d="M1 6h5" stroke="#6e8496" strokeWidth="2" /></Svg></MdiButton>
              <MdiButton aria-label="还原文档"><Svg s={9} vb="0 0 9 9"><path d="M3 3V1h5v4H6M1 4h5v4H1z" stroke="#8396a5" strokeWidth="1.300" /></Svg></MdiButton>
              <MdiButton aria-label="关闭文档"><Cross c="#7c8e9d" w={2} /></MdiButton>
            </MdiButtons>
          </MenuBar>
          <ToolRow>
            <ToolBar>
              <Grip />
              <Tool aria-label="图层"><Layers /></Tool>
              <Tool aria-label="上一图层"><Layers last="#ecc62b"><path d="M1 15l4-4M2 11h3v3" stroke="#222" /></Layers></Tool>
              <Sep />
              <LayerBox>
                <Bulb /><SunIcon /><SunSheet /><LockIcon />
                <Svg s={12} vb="0 0 12 12"><path d="M1.500 1.500h9v9h-9z" stroke="#000" fill="#fff" /></Svg>
                <select aria-label="当前图层"><option>0</option></select>
                <Tri d="d" c="#000" />
              </LayerBox>
              <Sep />
              <Tool aria-label="线型"><Svg s={16}><path d="M1 4h15" stroke="#000" strokeDasharray="1 1" /><path d="M1 7.500h15" stroke="#000" strokeWidth="2" strokeDasharray="2 1" /><path d="M1 11.500h15" stroke="#000" strokeWidth="2" /></Svg></Tool>
              <Sep />
              {topTools.map((g, i) => (
                <React.Fragment key={i}>{g.map((x, j) => <Tool key={j}>{x}</Tool>)}<Sep /></React.Fragment>
              ))}
              <Tool aria-label="撤销"><Undo /></Tool>
              <Tool $w={13} aria-label="撤销列表"><Svg s={5} vb="0 0 5 5"><path d="M0 1h5L2.500 4z" fill="#000080" /></Svg></Tool>
              <Tool aria-label="重做"><Undo c="#bcbcbc" flip /></Tool>
              <Tool $w={13} aria-label="重做列表"><Svg s={5} vb="0 0 5 5"><path d="M0 1h5L2.500 4z" fill="#aaa" /></Svg></Tool>
              <Sep />
              <Tool aria-label="特性"><Palette /></Tool>
              <Tool aria-label="设计中心"><Grid /></Tool>
              <Sep />
              {editTools.map((x, j) => <Tool key={j}>{x}</Tool>)}
              <Sep />
              <Tool aria-label="帮助"><Help /></Tool>
            </ToolBar>
          </ToolRow>

          <Work>
            <Left>
              <LeftInner>
                <PanelHead>
                  <MiniButton $w={13} aria-label="收起"><Svg s={5} vb="0 0 5 5"><path d="M0 3h5" stroke="#000" /></Svg></MiniButton>
                  <MiniButton aria-label="关闭面板"><Cross s={7} w={1.8} /></MiniButton>
                </PanelHead>
                <LayerTools>
                  {layerTools.map((x, i) => <Tool key={i} $w={26}>{x}</Tool>)}
                  <input aria-label="筛选图层" />
                </LayerTools>
                <ListFrame>
                  <ListArea>
                    <LayerTable>
                      {layers.map(([n, c, t], i) => (
                        <LayerRow key={n}>
                          <Branch>{i === 0 && <Expand aria-label="展开"><Svg s={7} vb="0 0 7 7"><path d="M1 3.500h5M3.500 1v5" stroke="#23409a" /></Svg></Expand>}</Branch>
                          <Check type="checkbox" defaultChecked />
                          <Swatch $c={c} />
                          <LayerName>{n}</LayerName>
                          <span>{t}</span>
                        </LayerRow>
                      ))}
                    </LayerTable>
                    <Bar>
                      <Spacer $size={16} />
                      <Thumb><Svg s={8} vb="0 0 8 8"><path d="M1 1.500h6M1 4.500h6M1 7.500h6" stroke="#555" /></Svg></Thumb>
                      <Tool $w={16} $h={33} aria-label="向下"><Tri d="d" c="#555" /></Tool>
                    </Bar>
                  </ListArea>
                  <Bar $flat>
                    <Tool $w={18} $h={17} aria-label="向左"><Tri d="l" c="#555" /></Tool>
                    <Thumb $flat $size={140}><Svg s={8} vb="0 0 8 8"><path d="M1.500 1v6M4.500 1v6M7.500 1v6" stroke="#555" /></Svg></Thumb>
                    <Spacer />
                    <Tool $w={18} $h={17} aria-label="向右"><Tri d="r" c="#555" /></Tool>
                    <Spacer $size={16} />
                  </Bar>
                </ListFrame>
                <PaneTabs>
                  <PaneTab $on $w={59}><Svg s={15}><path d="M1 14l5 1 9-4-5-1zM1 10l5 1 9-4-5-1zM1 6l5 1 9-4-5-1z" fill="#fff" stroke="#555" /></Svg>图层</PaneTab>
                  <PaneTab $w={56}><Svg s={12} h={15} vb="0 0 12 15"><rect x="1" y="1" width="10" height="13" fill="#f4f4f4" stroke="#666" strokeWidth="1.500" /><path d="M3 4h6M3 7h6M3 10h6M3 12h6" stroke="#555" strokeDasharray="2 1" /></Svg>常用</PaneTab>
                  <PaneTab $w={56}><Svg s={14} h={16} vb="0 0 14 16"><path d="M1 1h8l3 3v11H1z" fill="#f8f8f8" stroke="#555" /><circle cx="9" cy="11" r="4.200" fill="#d8ebf8" stroke="#4f94c6" /><path d="M8 10h1.500v3M8.500 8h1" stroke="#1b5ea0" /></Svg>信息</PaneTab>
                  <PaneTab $w={41}><Svg s={12} h={15} vb="0 0 12 15"><rect x="1" y="1" width="10" height="13" fill="#f4f4f4" stroke="#666" strokeWidth="1.500" /><path d="M3 4h6M3 7h6M3 10h6M3 12h6" stroke="#555" strokeDasharray="2 1" /></Svg>快捷</PaneTab>
                  <PageButton aria-label="前一页"><Svg s={6} vb="0 0 8 8"><path d="M6 0v8L2 4z" fill="#3c5cc0" /></Svg></PageButton>
                  <PageButton aria-label="后一页"><Svg s={6} vb="0 0 8 8"><path d="M2 0v8l4-4z" fill="#3c5cc0" /></Svg></PageButton>
                </PaneTabs>
              </LeftInner>
            </Left>

            <SideDock>
              <SideTools>
                <Grip $flat />
                {sideA.map((x, i) => <Tool key={i} $w={24} $h={22}>{x}</Tool>)}
                <Tool $w={24} $h={22} aria-label="注记"><Svg s={16}><text x="0" y="14" fontSize="16" fill="#f00" fontFamily="Noto Sans CJK SC">注</text></Svg></Tool>
                <Sep $flat />
                {sideB.map((x, i) => <Tool key={i} $w={24} $h={22}>{x}</Tool>)}
                <Tool $w={24} $h={22} aria-label="高程"><Svg vb="0 0 18 18"><text x="0" y="14" fontSize="12" fontWeight="700" fill="#f00" fontFamily="Liberation Sans">.91</text></Svg></Tool>
                <Tool $w={24} $h={22} aria-label="圆"><Svg s={14}><circle cx="8" cy="8" r="6" stroke="#000" /><path d="M7 8h2" stroke="#000" strokeWidth="2" /></Svg></Tool>
                <Tool $w={24} $h={22} aria-label="直线"><Svg><path d="M2 14L14 2" stroke="#111" strokeWidth="1.200" /><path d="M0 16l2-5 3 3zM16 0l-5 2 3 3z" fill="#111" /><path d="M7 7h3v3H7z" fill="#1c86e0" /></Svg></Tool>
                <Tool $w={24} $h={22} aria-label="曲线"><Line d="M3 2q-3 3 0 6t-1 6M12 2q-2 3 1 6t-1 6" /></Tool>
              </SideTools>
            </SideDock>

            <Center>
              <ViewRow>
                <Canvas>
                  <RedBox />
                  <Dialog role="dialog" aria-labelledby="dlg-title">
                    <DialogTitle>
                      <h2 id="dlg-title">坐标坪高</h2>
                      <RedClose aria-label="关闭"><Svg s={12} h={10} vb="0 0 12 10"><path d="M2 1l8 8M10 1L2 9" stroke="#46506a" strokeWidth="3.800" /><path d="M2 1l8 8M10 1L2 9" stroke="#fff" strokeWidth="2.200" /></Svg></RedClose>
                    </DialogTitle>
                    <DialogBody>
                      <DialogMain>
                        <ListBox size={5} aria-label="注记类型">
                          {['注记坐标', '注记坪高', '注记经纬度', '管道注记', '距离标注'].map(o => <option key={o}>{o}</option>)}
                        </ListBox>
                        <Tiles>
                          {Array.from({ length: 20 }, (_, i) => <Tile key={i} aria-label={`图块 ${i + 1}`}>{tileArt[i]}</Tile>)}
                        </Tiles>
                      </DialogMain>
                      <DialogButtons>
                        <PushButton $w={84} disabled>上一组<span>(P)</span></PushButton>
                        <PushButton $w={85} $gap={30} disabled>下一组<span>(N)</span></PushButton>
                        <PushButton $w={68} $gap={64} $main>确定</PushButton>
                        <PushButton $w={52} $gap={30}>取消</PushButton>
                      </DialogButtons>
                    </DialogBody>
                  </Dialog>
                </Canvas>
                <Bar>
                  <Tool $w={17} $h={18} aria-label="向上"><Tri d="u" /></Tool>
                  <Thumb $size={16} />
                  <Spacer />
                  <Tool $w={17} $h={18} aria-label="向下"><Tri d="d" /></Tool>
                </Bar>
              </ViewRow>
              <LayoutRow>
                <NavButton aria-label="首页"><Svg s={9} vb="0 0 9 9"><path d="M1 0v9" stroke="#000" strokeWidth="1.500" /><path d="M8 0v9L3 4.500z" fill="#000" /></Svg></NavButton>
                <NavButton aria-label="上一页"><Svg s={9} vb="0 0 9 9"><path d="M7 0v9L2 4.500z" fill="#000" /></Svg></NavButton>
                <NavButton aria-label="下一页"><Svg s={9} vb="0 0 9 9"><path d="M2 0v9l5-4.500z" fill="#000" /></Svg></NavButton>
                <NavButton aria-label="末页"><Svg s={9} vb="0 0 9 9"><path d="M8 0v9" stroke="#000" strokeWidth="1.500" /><path d="M1 0v9l5-4.500z" fill="#000" /></Svg></NavButton>
                <SheetTab $on><Svg s={42} h={15} vb="0 0 42 15"><path d="M0 0h42l-5 14H5z" fill="#000" /></Svg>模型</SheetTab>
                <SheetTab><Svg s={56} h={15} vb="0 0 56 15"><path d="M0 0h55l-5 13.500H5z" fill="#fff" stroke="#000" /></Svg>Layout1</SheetTab>
                <Spacer />
                <Bar $flat>
                  <Thumb $size={5} />
                  <Tool $w={18} $h={15} aria-label="向左"><Tri d="l" /></Tool>
                  <Spacer $size={266} />
                  <Thumb $flat $size={16} />
                  <Tool $w={18} $h={15} aria-label="向右"><Tri d="r" /></Tool>
                  <Spacer $size={16} />
                </Bar>
              </LayoutRow>
            </Center>

            <Right>
              <RightHead><Grip $flat /><MiniButton aria-label="关闭菜单"><Cross s={7} w={1.8} /></MiniButton></RightHead>
              <RightBody>
                <RightIcons>
                  {rightIcons.map((x, i) => <Tool key={i} $w={20} $h={22} $on={i === 12}>{x}</Tool>)}
                </RightIcons>
                <RightMenu>
                  <Locate>坐标定位</Locate>
                  <Category>文字注记</Category>
                  <SubPanel>{subItems.map(s => <SubItem key={s}>{s}</SubItem>)}</SubPanel>
                  {categories.map(c => <Category key={c}>{c}</Category>)}
                </RightMenu>
              </RightBody>
            </Right>
          </Work>
          <CommandStrip><CommandText>Autodesk 图形说明</CommandText></CommandStrip>
        </Client>
      </Shell>
      <Floating aria-label="图解方法">
        <FloatingBody>
          <FloatingTitle>图解方法<FloatingClose aria-label="关闭"><Cross w={1.8} /></FloatingClose></FloatingTitle>
          <FloatingTools>{floatIcons.map((x, i) => <Tool key={i} $h={24}>{x}</Tool>)}</FloatingTools>
        </FloatingBody>
      </Floating>
      <SiteMark><div>地信网<em>论坛</em></div><p>bbs.3s001.com</p></SiteMark>
    </Frame>
  </>
);

export default App;
